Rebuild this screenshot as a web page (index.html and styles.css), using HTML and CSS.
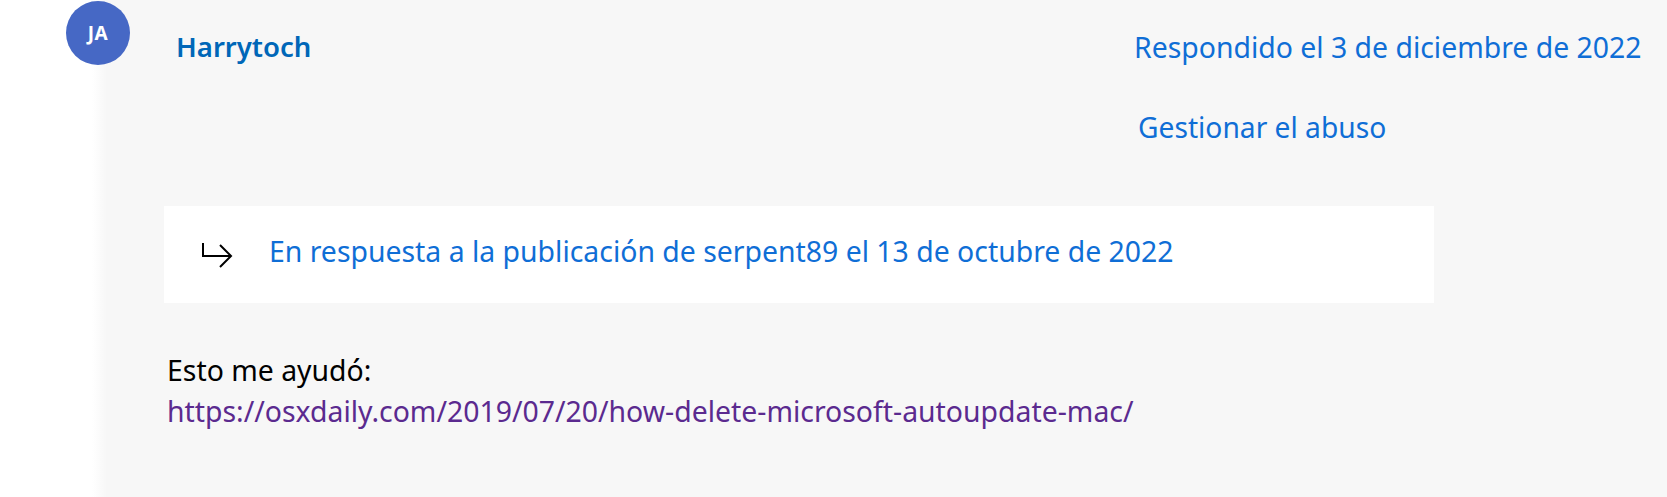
FILE: index.html
```html
<!DOCTYPE html>
<html lang="es">
<head>
<meta charset="utf-8">
<title>Respuesta</title>
<link rel="stylesheet" href="styles.css">
</head>
<body>
<div class="page">
  <div class="avatar">JA</div>
  <div class="panel">
    <div class="header">
      <a class="author" href="#">Harrytoch</a>
      <div class="meta">
        <a class="meta-link" href="#">Respondido el 3 de diciembre de 2022</a>
        <a class="meta-link abuse" href="#">Gestionar el abuso</a>
      </div>
    </div>
    <div class="quote">
      <svg class="reply-icon" width="32" height="28" viewBox="0 0 32 28" aria-hidden="true">
        <path d="M2 1 V14 H30 M19 3 L30 14 L19 25" fill="none" stroke="#000" stroke-width="2" stroke-linejoin="miter"/>
      </svg>
      <a class="quote-link" href="#">En respuesta a la publicación de serpent89 el 13 de octubre de 2022</a>
    </div>
    <div class="body">
      <p class="line">Esto me ayudó:</p>
      <a class="url" href="#">https://osxdaily.com/2019/07/20/how-delete-microsoft-autoupdate-mac/</a>
    </div>
  </div>
</div>
</body>
</html>
```
FILE: styles.css
```css
html, body {
  margin: 0;
  padding: 0;
  background: #ffffff;
}
body {
  font-family: "Noto Sans", "Open Sans", "DejaVu Sans", sans-serif;
  width: 1667px;
  height: 497px;
  overflow: hidden;
}
a {
  text-decoration: none;
}
.page {
  position: relative;
  height: 497px;
}
.avatar {
  position: absolute;
  left: 66px;
  top: 1px;
  width: 64px;
  height: 64px;
  border-radius: 50%;
  background: #4668c5;
  color: #ffffff;
  font-weight: 700;
  font-size: 19px;
  display: flex;
  align-items: center;
  justify-content: center;
  letter-spacing: 0.5px;
  z-index: 2;
}
.panel {
  margin-left: 92px;
  height: 497px;
  box-sizing: border-box;
  padding: 27px 26px 0 72px;
  background: linear-gradient(to right, #ffffff 0px, #f7f7f7 15px, #f7f7f7 100%);
}
.header {
  display: flex;
  justify-content: space-between;
  align-items: flex-start;
}
.author {
  color: #0067b8;
  font-weight: 600;
  font-size: 27.5px;
  line-height: 40px;
  padding-left: 12px;
}
.meta {
  display: flex;
  flex-direction: column;
  gap: 40px;
  width: 507px;
}
.meta-link {
  color: #0f6ed6;
  font-size: 28.4px;
  line-height: 40px;
  white-space: nowrap;
}
.abuse {
  padding-left: 4px;
  font-size: 28.2px;
}
.quote {
  margin-top: 59px;
  width: 1270px;
  height: 97px;
  box-sizing: border-box;
  background: #ffffff;
  display: flex;
  align-items: flex-start;
  padding: 25px 0 0 37px;
}
.reply-icon {
  flex: none;
  margin-top: 11px;
  width: 32px;
  height: 28px;
}
.quote-link {
  margin-left: 36px;
  color: #0f6ed6;
  font-size: 28.4px;
  line-height: 40px;
  white-space: nowrap;
}
.body {
  margin-top: 47px;
  padding-left: 3px;
  font-size: 28.4px;
  line-height: 41px;
}
.line {
  margin: 0;
  color: #000000;
}
.url {
  color: #5b2a8f;
}
```
